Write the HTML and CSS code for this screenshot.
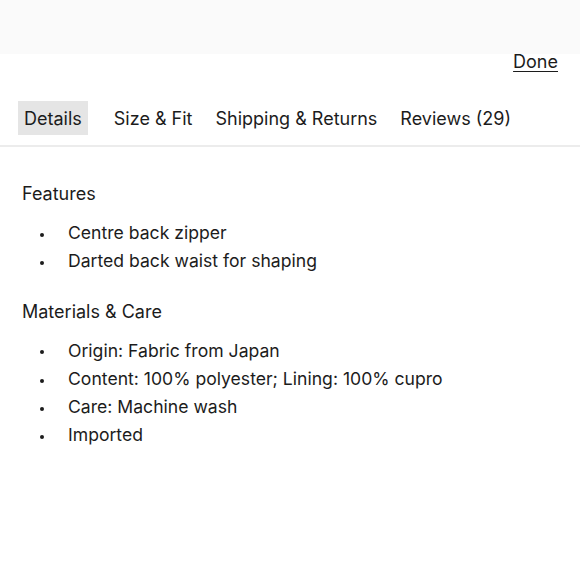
FILE: index.html
```html
<!DOCTYPE html>
<html lang="en">

<head>
    <meta charset="UTF-8">
    <meta name="viewport" content="width=device-width, initial-scale=1.0">
    <title>Product details</title>

    <link rel="stylesheet" href="styles.css">
</head>

<body>
    <div class="top-band"></div>

    <div class="sheet">
        <div class="done-row">
            <a href="#" class="done">Done</a>
        </div>

        <nav class="tabs">
            <a href="#" class="tab active">Details</a>
            <a href="#" class="tab">Size &amp; Fit</a>
            <a href="#" class="tab">Shipping &amp; Returns</a>
            <a href="#" class="tab">Reviews (29)</a>
        </nav>

        <div class="panel">
            <h2 class="section-title">Features</h2>
            <ul class="bullets">
                <li>Centre back zipper</li>
                <li>Darted back waist for shaping</li>
            </ul>

            <h2 class="section-title">Materials &amp; Care</h2>
            <ul class="bullets">
                <li>Origin: Fabric from Japan</li>
                <li>Content: 100% polyester; Lining: 100% cupro</li>
                <li>Care: Machine wash</li>
                <li>Imported</li>
            </ul>
        </div>
    </div>
</body>

</html>
```

FILE: styles.css
```css
html {
    font-family: Inter, "Open Sans", sans-serif;
    font-size: 18px;
    background: #fff;
    color: #1c1c1c;
}

body {
    margin: 0;
}

.top-band {
    height: 54px;
    background: #fafafa;
}

.done-row {
    display: flex;
    justify-content: flex-end;
    padding: 0 22px;
    height: 47px;
    align-items: flex-start;
}

.done {
    color: #1c1c1c;
    line-height: 24px;
    margin-top: -4px;
    text-decoration: underline;
    text-underline-offset: 3px;
}

.tabs {
    display: flex;
    gap: 11px;
    padding: 0 0 10px 18px;
    border-bottom: 2px solid #ececec;
}

.tab {
    padding: 6px 6px 4px;
    line-height: 24px;
    color: #1c1c1c;
    text-decoration: none;
}

.tab.active {
    background: #e5e5e5;
    margin-right: 9px;
}

.panel {
    padding: 33px 22px 0;
}

.section-title {
    margin: 0 0 11px;
    font-size: 18px;
    font-weight: 400;
    line-height: 28px;
}

.bullets {
    list-style: none;
    margin: 0 0 22px;
    padding: 0;
    line-height: 28.3px;
    font-size: 17.6px;
}

.bullets li {
    display: flex;
    align-items: center;
}

.bullets li::before {
    content: "";
    width: 4px;
    height: 4px;
    border-radius: 50%;
    background: #1c1c1c;
    margin: 3px 24px 0 18px;
    flex: none;
}
```
